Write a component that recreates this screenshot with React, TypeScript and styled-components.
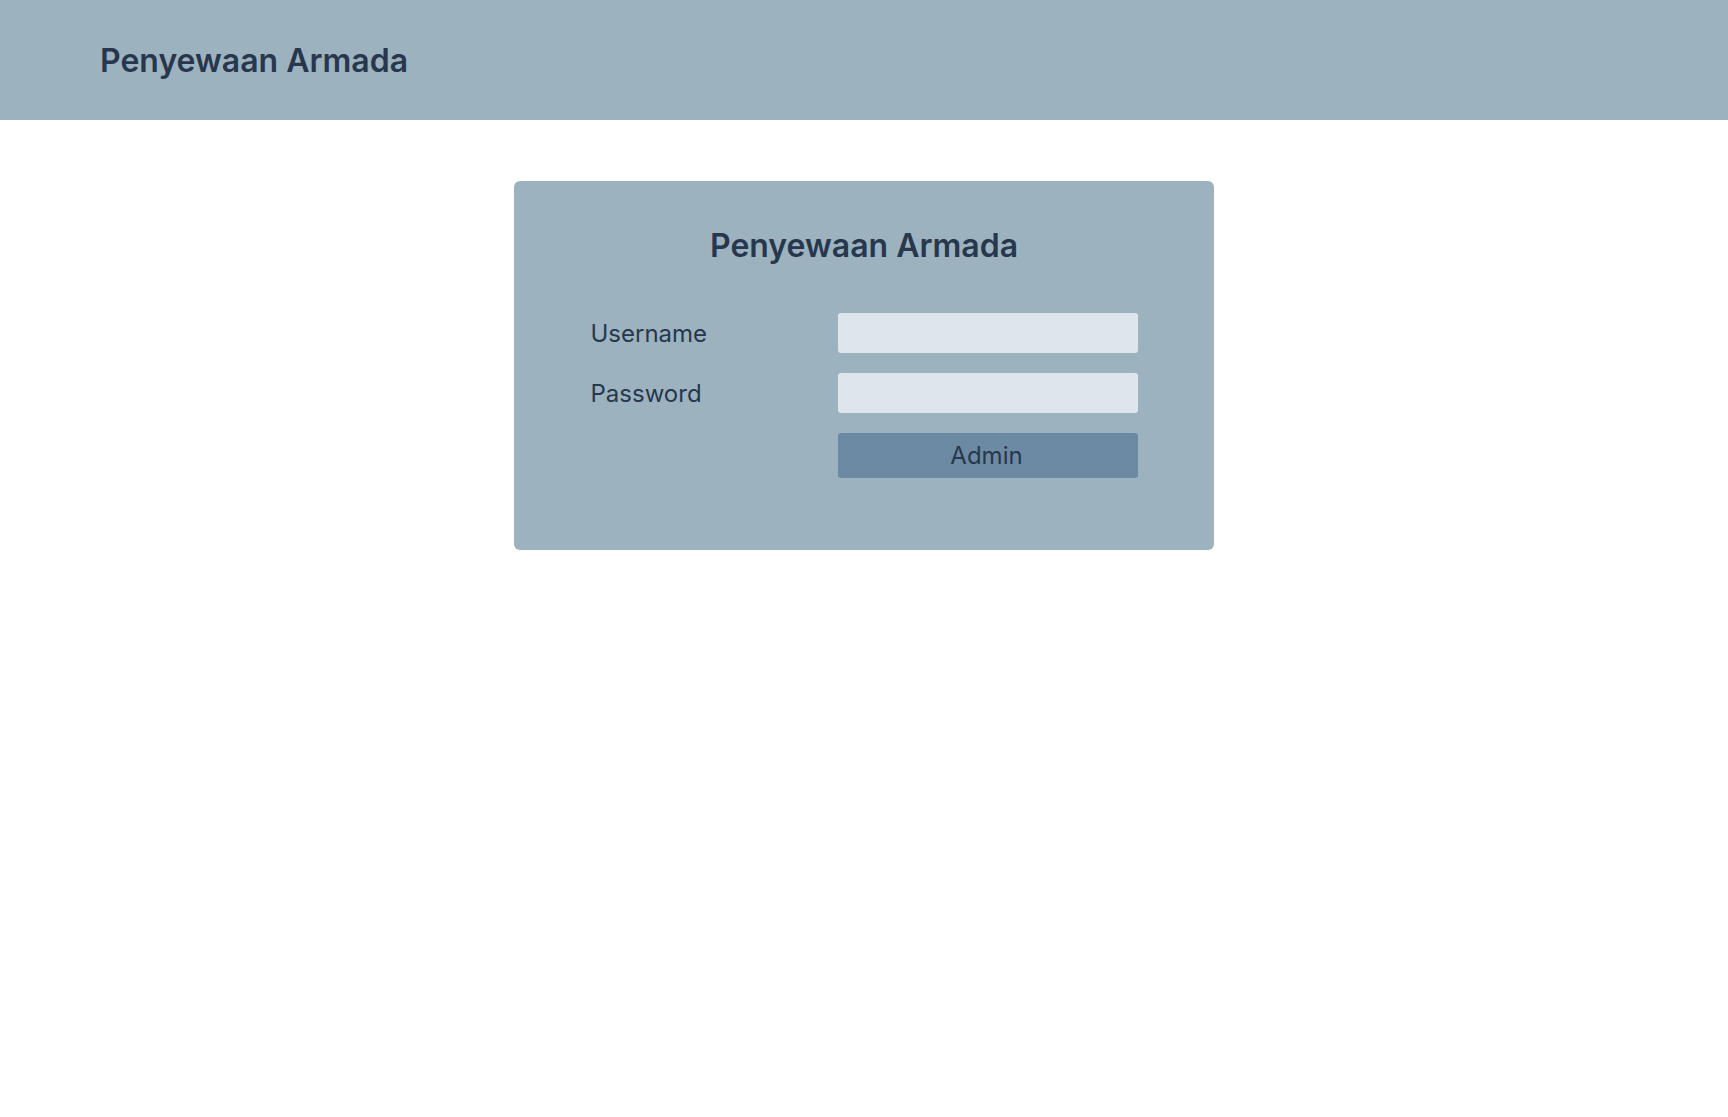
import styled, { createGlobalStyle } from 'styled-components';

const GlobalStyle = createGlobalStyle`
  * {
    box-sizing: border-box;
  }

  body {
    margin: 0;
    background: #ffffff;
    font-family: Inter, "Noto Sans", sans-serif;
    color: #27374d;
  }
`;

export default function App() {
  return (
    <>
      <GlobalStyle />
      <Header>
        <Brand>Penyewaan Armada</Brand>
      </Header>
      <Main>
        <LoginCard>
          <CardTitle>Penyewaan Armada</CardTitle>
          <Form onSubmit={(e) => e.preventDefault()}>
            <Label htmlFor="username">Username</Label>
            <Input id="username" type="text" />
            <Label htmlFor="password">Password</Label>
            <Input id="password" type="password" />
            <Spacer />
            <SubmitButton type="submit">Admin</SubmitButton>
          </Form>
        </LoginCard>
      </Main>
    </>
  );
}

const Header = styled.header`
  height: 120px;
  background: #9db2bf;
  display: flex;
  align-items: center;
  padding: 0 100px;
`;

const Brand = styled.h1`
  margin: 0;
  font-size: 32px;
  font-weight: 600;
  color: #27374d;
`;

const Main = styled.main`
  display: flex;
  justify-content: center;
  padding-top: 61px;
`;

const LoginCard = styled.section`
  width: 700px;
  height: 369px;
  background: #9db2bf;
  border-radius: 6px;
  padding: 45px 0 0;
  display: flex;
  flex-direction: column;
  align-items: center;
`;

const CardTitle = styled.h2`
  margin: 0 0 48px;
  font-size: 32px;
  font-weight: 600;
  color: #27374d;
`;

const Form = styled.form`
  display: grid;
  grid-template-columns: 247px 300px;
  row-gap: 20px;
  align-items: center;
`;

const Label = styled.label`
  font-size: 24px;
  color: #27374d;
`;

const Input = styled.input`
  height: 40px;
  border: none;
  border-radius: 3px;
  background: #dde6ed;
  padding: 0 10px;
  font: inherit;
  font-size: 20px;
  color: #27374d;
  outline: none;
`;

const Spacer = styled.div``;

const SubmitButton = styled.button`
  height: 45px;
  padding: 0 2px 0 0;
  border: none;
  border-radius: 3px;
  background: #6c8aa3;
  font-family: inherit;
  font-size: 24px;
  color: #27374d;
  cursor: pointer;
`;
